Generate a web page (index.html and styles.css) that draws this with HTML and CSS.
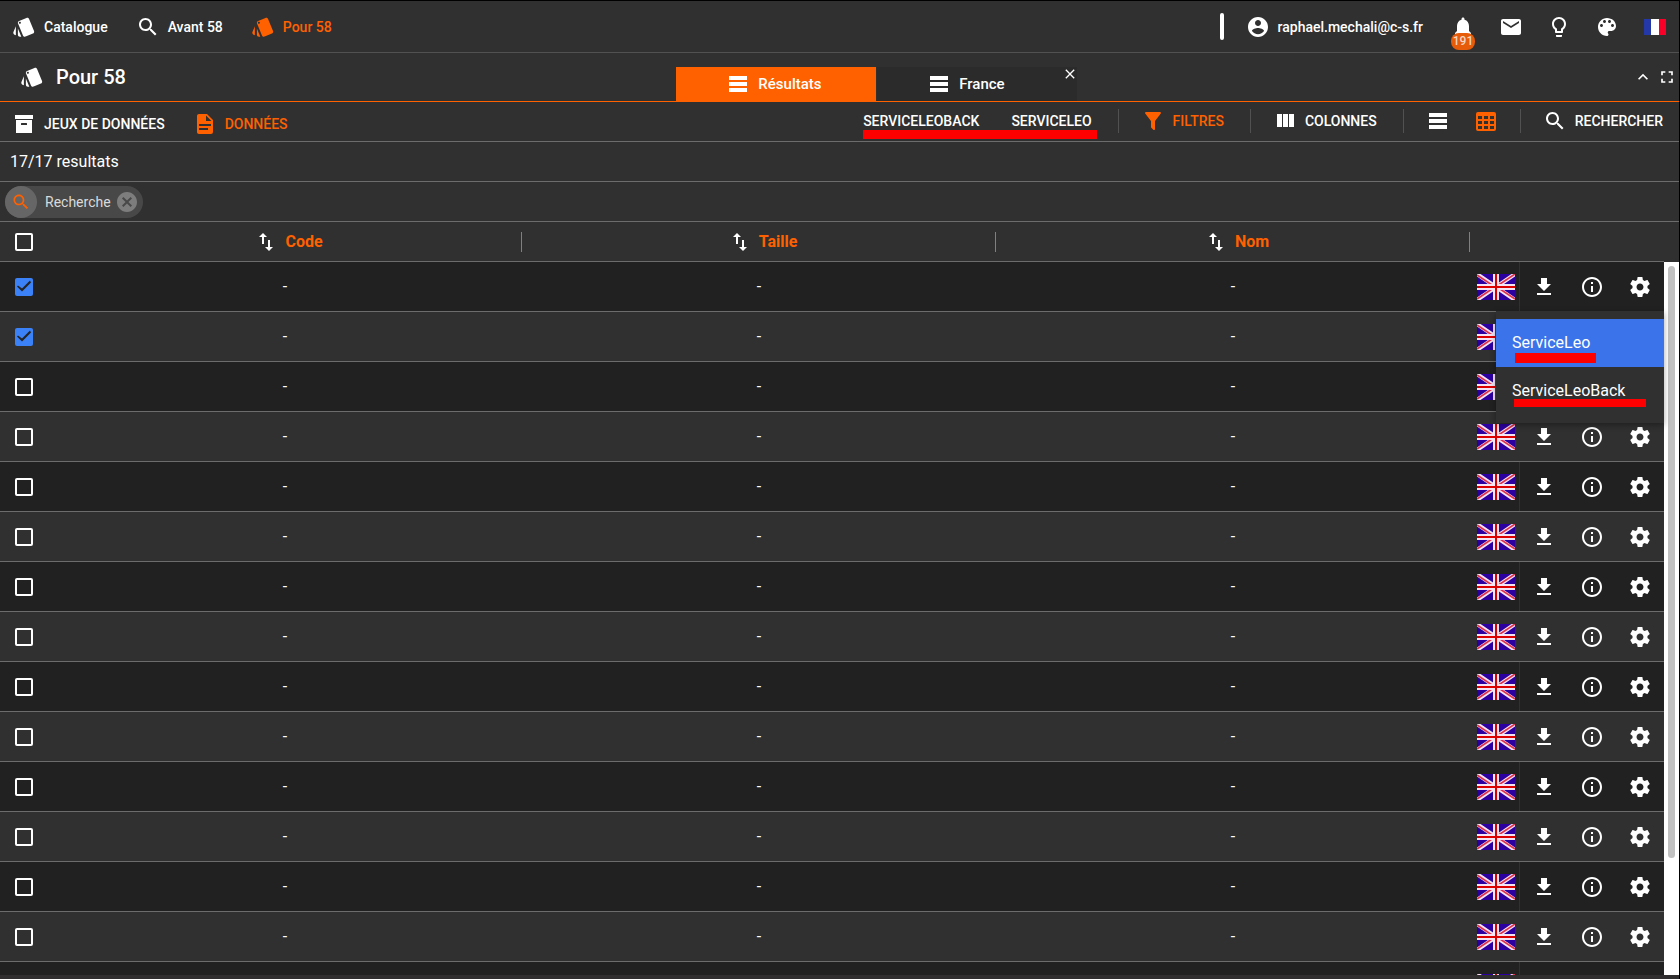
FILE: index.html
```html
<!DOCTYPE html>
<html lang="fr">
<head>
<meta charset="utf-8">
<title>Pour 58</title>
<link rel="stylesheet" href="styles.css">
</head>
<body>
<svg class="sprite" aria-hidden="true">
  <symbol id="i-style" viewBox="0 0 24 24"><path d="M2.53 19.65l1.34.56v-9.03l-2.43 5.86c-.41 1.02.08 2.19 1.09 2.61zm19.5-3.7L17.07 3.98c-.31-.75-1.04-1.21-1.81-1.23-.26 0-.53.04-.79.15L7.1 5.95c-.75.31-1.21 1.03-1.23 1.8-.01.27.04.54.15.8l4.96 11.97c.31.76 1.05 1.22 1.83 1.23.26 0 .52-.05.77-.15l7.36-3.05c1.02-.42 1.51-1.59 1.09-2.6zM7.88 8.75c-.55 0-1-.45-1-1s.45-1 1-1 1 .45 1 1-.45 1-1 1zm-2 11c0 1.1.9 2 2 2h1.45l-3.45-8.34v6.34z"/></symbol>
  <symbol id="i-search" viewBox="0 0 24 24"><path d="M15.5 14h-.79l-.28-.27C15.41 12.59 16 11.11 16 9.5 16 5.91 13.09 3 9.5 3S3 5.91 3 9.5 5.91 16 9.5 16c1.61 0 3.09-.59 4.23-1.57l.27.28v.79l5 4.99L20.49 19l-4.99-5zm-6 0C7.01 14 5 11.99 5 9.5S7.01 5 9.5 5 14 7.01 14 9.5 11.99 14 9.5 14z"/></symbol>
  <symbol id="i-archive" viewBox="0 0 24 24"><path d="M3 3H21V7H3V3M4 8H20V21H4V8M9.5 11A.5.5 0 0 0 9 11.5V13H15V11.5A.5.5 0 0 0 14.5 11H9.5Z"/></symbol>
  <symbol id="i-doc" viewBox="0 0 24 24"><path d="M13 9H18.5L13 3.5V9M6 2H14L20 8V20A2 2 0 0 1 18 22H6C4.89 22 4 21.1 4 20V4C4 2.89 4.89 2 6 2M15 18V16H6V18H15M18 14V12H6V14H18Z"/></symbol>
  <symbol id="i-lines" viewBox="0 0 24 24"><path d="M3 4h18v4H3zM3 10h18v4H3zM3 16h18v4H3z"/></symbol>
  <symbol id="i-columns" viewBox="0 0 24 24"><path d="M4 5h5v13H4zM10 5h5v13h-5zM16 5h5v13h-5z"/></symbol>
  <symbol id="i-grid" viewBox="0 0 24 24"><path fill-rule="evenodd" d="M4 3h16a2 2 0 0 1 2 2v15a2 2 0 0 1-2 2H4a2 2 0 0 1-2-2V5a2 2 0 0 1 2-2zM4 7v3h4V7zM10 7v3h4V7zM16 7v3h4V7zM4 12v3h4v-3zM10 12v3h4v-3zM16 12v3h4v-3zM4 17v3h4v-3zM10 17v3h4v-3zM16 17v3h4v-3z"/></symbol>
  <symbol id="i-filter" viewBox="0 0 24 24"><path d="M14 12V19.88C14.04 20.18 13.94 20.5 13.71 20.71C13.32 21.1 12.69 21.1 12.3 20.71L10.29 18.7C10.06 18.47 9.96 18.16 10 17.87V12H9.97L4.21 4.62C3.87 4.19 3.95 3.56 4.38 3.22C4.57 3.08 4.78 3 5 3H19C19.22 3 19.43 3.08 19.62 3.22C20.05 3.56 20.13 4.19 19.79 4.62L14.03 12H14Z"/></symbol>
  <symbol id="i-account" viewBox="0 0 24 24"><path d="M12 2C6.48 2 2 6.48 2 12s4.48 10 10 10 10-4.48 10-10S17.52 2 12 2zm0 3c1.66 0 3 1.34 3 3s-1.34 3-3 3-3-1.34-3-3 1.34-3 3-3zm0 14.2c-2.5 0-4.71-1.28-6-3.22.03-1.99 4-3.08 6-3.08 1.99 0 5.97 1.09 6 3.08-1.29 1.94-3.5 3.22-6 3.22z"/></symbol>
  <symbol id="i-bell" viewBox="0 0 24 24"><path d="M12 22c1.1 0 2-.9 2-2h-4c0 1.1.89 2 2 2zm6-6v-5c0-3.07-1.64-5.64-4.5-6.32V4c0-.83-.67-1.5-1.5-1.5s-1.5.67-1.5 1.5v.68C7.63 5.36 6 7.92 6 11v5l-2 2v1h16v-1l-2-2z"/></symbol>
  <symbol id="i-mail" viewBox="0 0 24 24"><path d="M20 4H4c-1.1 0-1.99.9-1.99 2L2 18c0 1.1.9 2 2 2h16c1.1 0 2-.9 2-2V6c0-1.1-.9-2-2-2zm0 4l-8 5-8-5V6l8 5 8-5v2z"/></symbol>
  <symbol id="i-bulb" viewBox="0 0 24 24"><path d="M9 21c0 .55.45 1 1 1h4c.55 0 1-.45 1-1v-1H9v1zm3-19C8.14 2 5 5.14 5 9c0 2.38 1.19 4.47 3 5.74V17c0 .55.45 1 1 1h6c.55 0 1-.45 1-1v-2.26c1.81-1.27 3-3.36 3-5.74 0-3.86-3.14-7-7-7zm2.85 11.1l-.85.6V16h-4v-2.3l-.85-.6C7.8 12.16 7 10.63 7 9c0-2.76 2.24-5 5-5s5 2.24 5 5c0 1.63-.8 3.16-2.15 4.1z"/></symbol>
  <symbol id="i-palette" viewBox="0 0 24 24"><path d="M12 3c-4.97 0-9 4.03-9 9s4.03 9 9 9c.83 0 1.5-.67 1.5-1.5 0-.39-.15-.74-.39-1.01-.23-.26-.38-.61-.38-.99 0-.83.67-1.5 1.5-1.5H16c2.76 0 5-2.24 5-5 0-4.42-4.03-8-9-8zm-5.5 9c-.83 0-1.5-.67-1.5-1.5S5.67 9 6.5 9 8 9.67 8 10.5 7.33 12 6.5 12zm3-4C8.67 8 8 7.33 8 6.5S8.67 5 9.5 5s1.5.67 1.5 1.5S10.33 8 9.5 8zm5 0c-.83 0-1.5-.67-1.5-1.5S13.67 5 14.5 5s1.5.67 1.5 1.5S15.33 8 14.5 8zm3 4c-.83 0-1.5-.67-1.5-1.5S16.67 9 17.5 9s1.5.67 1.5 1.5-.67 1.5-1.5 1.5z"/></symbol>
  <symbol id="i-close" viewBox="0 0 24 24"><path d="M19 6.41L17.59 5 12 10.59 6.41 5 5 6.41 10.59 12 5 17.59 6.41 19 12 13.41 17.59 19 19 17.59 13.41 12z"/></symbol>
  <symbol id="i-cancel" viewBox="0 0 24 24"><path d="M12 2C6.47 2 2 6.47 2 12s4.47 10 10 10 10-4.47 10-10S17.53 2 12 2zm5 13.59L15.59 17 12 13.41 8.41 17 7 15.59 10.59 12 7 8.41 8.41 7 12 10.59 15.59 7 17 8.41 13.41 12 17 15.59z"/></symbol>
  <symbol id="i-less" viewBox="0 0 24 24"><path d="M12 8l-6 6 1.41 1.41L12 10.83l4.59 4.58L18 14z"/></symbol>
  <symbol id="i-full" viewBox="0 0 24 24"><path d="M7 14H5v5h5v-2H7v-3zm-2-4h2V7h3V5H5v5zm12 7h-3v2h5v-5h-2v3zM14 5v2h3v3h2V5h-5z"/></symbol>
  <symbol id="i-sort" viewBox="0 0 24 24"><path d="M16 17.01V10h-2v7.01h-3L15 21l4-3.99h-3zM9 3L5 6.99h3V14h2V6.99h3L9 3z"/></symbol>
  <symbol id="i-download" viewBox="0 0 24 24"><path d="M19 9h-4V3H9v6H5l7 7 7-7zM5 18v2h14v-2H5z"/></symbol>
  <symbol id="i-info" viewBox="0 0 24 24"><path d="M11 17h2v-6h-2v6zm1-15C6.48 2 2 6.48 2 12s4.48 10 10 10 10-4.48 10-10S17.52 2 12 2zm0 18c-4.41 0-8-3.59-8-8s3.59-8 8-8 8 3.59 8 8-3.59 8-8 8zM11 9h2V7h-2v2z"/></symbol>
  <symbol id="i-gear" viewBox="0 0 24 24"><path d="M19.43 12.98c.04-.32.07-.64.07-.98s-.03-.66-.07-.98l2.11-1.65c.19-.15.24-.42.12-.64l-2-3.46c-.12-.22-.39-.3-.61-.22l-2.49 1c-.52-.4-1.08-.73-1.69-.98l-.38-2.65C14.46 2.18 14.25 2 14 2h-4c-.25 0-.46.18-.49.42l-.38 2.65c-.61.25-1.17.59-1.69.98l-2.49-1c-.23-.09-.49 0-.61.22l-2 3.46c-.13.22-.07.49.12.64l2.11 1.65c-.04.32-.07.65-.07.98s.03.66.07.98l-2.11 1.65c-.19.15-.24.42-.12.64l2 3.46c.12.22.39.3.61.22l2.49-1c.52.4 1.08.73 1.69.98l.38 2.65c.03.24.24.42.49.42h4c.25 0 .46-.18.49-.42l.38-2.65c.61-.25 1.17-.59 1.69-.98l2.49 1c.23.09.49 0 .61-.22l2-3.46c.12-.22.07-.49-.12-.64l-2.11-1.65zM12 15.5c-1.93 0-3.5-1.57-3.5-3.5s1.57-3.5 3.5-3.5 3.5 1.57 3.5 3.5-1.57 3.5-3.5 3.5z"/></symbol>
  <symbol id="i-uk" viewBox="0 0 38 26"><path fill="#2c00a0" d="M0 0h38v26H0z"/><path stroke="#f4e4f4" stroke-width="4" d="M0 0l38 26M38 0L0 26"/><path stroke="#e0304c" stroke-width="1.6" d="M0 1l18 12M20 13l18 12M38 0L20 12M18 13L0 25"/><path fill="#f4e4f4" d="M16 0h6v26h-6zM0 10h38v6H0z"/><path fill="#dc0000" d="M18 0h2v26h-2zM0 12h38v2H0z"/></symbol>
  <symbol id="i-fr" viewBox="0 0 22 16"><path fill="#2438a8" d="M0 0h8v16H0z"/><path fill="#fff" d="M7 0h8v16H7z"/><path fill="#fa0028" d="M15 0h7v16h-7z"/></symbol>
</svg>
<div class="app">
  <header class="topbar">
    <nav class="topbar-nav">
      <a class="nav-link" href="#"><svg class="icon"><use href="#i-style"/></svg>Catalogue</a>
      <a class="nav-link" href="#"><svg class="icon"><use href="#i-search"/></svg>Avant 58</a>
      <a class="nav-link active" href="#"><svg class="icon"><use href="#i-style"/></svg>Pour 58</a>
    </nav>
    <div class="topbar-tools">
      <span class="topbar-bar"></span>
      <button class="account"><svg class="icon"><use href="#i-account"/></svg>raphael.mechali@c-s.fr</button>
      <button class="icon-button" aria-label="Notifications"><svg class="icon"><use href="#i-bell"/></svg><span class="badge">191</span></button>
      <button class="icon-button" aria-label="Contact"><svg class="icon"><use href="#i-mail"/></svg></button>
      <button class="icon-button" aria-label="Aide"><svg class="icon"><use href="#i-bulb"/></svg></button>
      <button class="icon-button" aria-label="Thème"><svg class="icon"><use href="#i-palette"/></svg></button>
      <button class="icon-button" aria-label="Langue"><svg class="flag-fr"><use href="#i-fr"/></svg></button>
    </div>
  </header>

  <section class="titlebar">
    <h1 class="title"><svg class="icon"><use href="#i-style"/></svg>Pour 58</h1>
    <div class="tabs">
      <button class="tab selected"><svg class="icon"><use href="#i-lines"/></svg>Résultats</button>
      <div class="tab-wrap">
        <button class="tab closable"><svg class="icon"><use href="#i-lines"/></svg>France</button>
        <button class="tab-close" aria-label="Fermer"><svg class="icon-small"><use href="#i-close"/></svg></button>
      </div>
    </div>
    <div class="title-tools">
      <button class="mini-button" aria-label="Réduire"><svg class="icon-mini"><use href="#i-less"/></svg></button>
      <button class="mini-button" aria-label="Plein écran"><svg class="icon-mini"><use href="#i-full"/></svg></button>
    </div>
  </section>

  <section class="toolbar">
    <div class="toolbar-views">
      <button class="view-button"><svg class="icon"><use href="#i-archive"/></svg>JEUX DE DONNÉES</button>
      <button class="view-button active"><svg class="icon"><use href="#i-doc"/></svg>DONNÉES</button>
    </div>
    <div class="toolbar-actions">
      <div class="services">
        <button class="tool-button">SERVICELEOBACK</button>
        <button class="tool-button">SERVICELEO</button>
        <span class="mark mark-services"></span>
      </div>
      <span class="divider"></span>
      <button class="tool-button active"><svg class="icon"><use href="#i-filter"/></svg>FILTRES</button>
      <span class="divider"></span>
      <button class="tool-button"><svg class="icon"><use href="#i-columns"/></svg>COLONNES</button>
      <span class="divider"></span>
      <div class="layouts">
        <button class="icon-button" aria-label="Liste"><svg class="icon"><use href="#i-lines"/></svg></button>
        <button class="icon-button active" aria-label="Tableau"><svg class="icon"><use href="#i-grid"/></svg></button>
      </div>
      <span class="divider"></span>
      <button class="tool-button"><svg class="icon"><use href="#i-search"/></svg>RECHERCHER</button>
    </div>
  </section>

  <p class="count">17/17 resultats</p>

  <div class="chips">
    <span class="chip">
      <span class="chip-avatar"><svg class="icon-chip"><use href="#i-search"/></svg></span>
      Recherche
      <button class="chip-delete" aria-label="Supprimer"><svg class="icon"><use href="#i-cancel"/></svg></button>
    </span>
  </div>

  <main class="results">
    <table class="grid">
      <colgroup><col class="col-check"><col><col><col><col class="col-options"></colgroup>
      <thead>
        <tr>
          <th><input class="check" type="checkbox" aria-label="Tout sélectionner"></th>
          <th><button class="sort"><svg class="icon"><use href="#i-sort"/></svg>Code</button></th>
          <th><button class="sort"><svg class="icon"><use href="#i-sort"/></svg>Taille</button></th>
          <th><button class="sort"><svg class="icon"><use href="#i-sort"/></svg>Nom</button></th>
          <th></th>
        </tr>
      </thead>
      <tbody id="rows"></tbody>
    </table>
    <div class="scroll"><div class="scroll-thumb"></div></div>
    <div class="menu" role="menu">
      <button class="menu-item selected" role="menuitem">ServiceLeo<span class="mark mark-first"></span></button>
      <button class="menu-item" role="menuitem">ServiceLeoBack<span class="mark mark-second"></span></button>
    </div>
  </main>
</div>
<script src="app.js"></script>
</body>
</html>
```

FILE: styles.css
```css
* { box-sizing: border-box; }

body {
  margin: 0;
  background: #302e2f;
  color: #fff;
  font-family: Roboto, "Liberation Sans", sans-serif;
  font-size: 14px;
}

button {
  margin: 0;
  padding: 0;
  border: 0;
  background: none;
  color: inherit;
  font: inherit;
}

.sprite { position: absolute; width: 0; height: 0; }

.app {
  display: flex;
  flex-direction: column;
  height: 100vh;
  padding-bottom: 4px;
  border-top: 1px solid #000;
  border-right: 1px solid #000;
  overflow: hidden;
}

.icon { flex: none; display: block; width: 24px; height: 24px; fill: currentColor; }
.icon-small { display: block; width: 16px; height: 16px; fill: currentColor; }
.icon-mini { display: block; width: 20px; height: 20px; fill: currentColor; }

.icon-button {
  position: relative;
  display: flex;
  align-items: center;
  justify-content: center;
  width: 48px;
  height: 38px;
}

.active { color: #ff6100; }

/* Top bar */
.topbar {
  display: flex;
  align-items: center;
  justify-content: space-between;
  height: 52px;
  flex: none;
  background: #303030;
  border-bottom: 1px solid #515151;
  font-weight: 500;
}

.topbar-nav { display: flex; gap: 28px; padding-left: 12px; }

.nav-link {
  display: flex;
  align-items: center;
  gap: 8px;
  color: #fff;
  text-decoration: none;
}
.nav-link.active { color: #ff6100; }

.topbar-tools { display: flex; align-items: center; }
.topbar-bar { width: 4px; height: 27px; border-radius: 2px; background: #fff; }
.account { display: flex; align-items: center; gap: 8px; padding: 0 16px 0 22px; }
.flag-fr { display: block; width: 22px; height: 16px; }

.badge {
  position: absolute;
  top: 25px;
  left: 12px;
  width: 24px;
  height: 17px;
  border-radius: 8px;
  background: #e65c08;
  color: #f3d5c3;
  font-size: 12px;
  line-height: 16px;
  text-align: center;
}

/* Title and tabs */
.titlebar {
  display: flex;
  align-items: center;
  height: 49px;
  flex: none;
  background: #303030;
  border-bottom: 1px solid #ff6100;
}

.title {
  display: flex;
  align-items: center;
  gap: 12px;
  margin: 0;
  padding: 0 12px 0 20px;
  font-size: 20px;
  font-weight: 500;
}

.tabs { flex: 1; align-self: flex-end; display: flex; justify-content: center; gap: 1px; }
.tab-wrap { position: relative; background: #2b2b2b; }

.tab {
  display: flex;
  align-items: center;
  justify-content: center;
  gap: 8px;
  width: 200px;
  height: 34px;
  padding-right: 4px;
  font-weight: 500;
  font-size: 15px;
}
.tab.selected { background: #ff6100; }
.tab.closable { padding-right: 22px; }
.tab-close { position: absolute; top: -1px; right: -1px; }

.title-tools { display: flex; padding-left: 16px; }
.mini-button { display: flex; align-items: center; justify-content: center; width: 24px; height: 24px; }

/* Toolbar */
.toolbar {
  display: flex;
  justify-content: space-between;
  height: 40px;
  flex: none;
  background: #303030;
  border-bottom: 1px solid #6c6c6c;
  font-weight: 500;
}

.toolbar-views { display: flex; align-items: center; gap: 28px; padding: 5px 0 0 12px; }
.view-button { display: flex; align-items: center; gap: 8px; }
.toolbar-actions { display: flex; align-items: center; padding-bottom: 1px; }
.services { position: relative; display: flex; }
.layouts { display: flex; padding-left: 4px; }
.tool-button { display: flex; align-items: center; gap: 8px; height: 38px; padding: 0 16px; }
.divider { width: 1px; height: 24px; margin: 0 6px 0 10px; background: #515151; }

/* Underline strokes drawn over the service names */
.mark { position: absolute; background: #f00; }
.mark-services { left: 16px; right: 11px; top: 28px; height: 9px; }
.mark-first { left: 19px; width: 81px; top: 34px; height: 10px; }
.mark-second { left: 18px; width: 132px; top: 32px; height: 8px; }

.count {
  flex: none;
  height: 40px;
  margin: 0;
  padding-left: 10px;
  background: #303030;
  border-bottom: 1px solid #6c6c6c;
  font-size: 16px;
  line-height: 39px;
}

.chips {
  display: flex;
  align-items: center;
  flex: none;
  height: 40px;
  padding-left: 5px;
  background: #303030;
  border-bottom: 1px solid #6c6c6c;
}

.chip {
  display: flex;
  align-items: center;
  height: 32px;
  padding-right: 4px;
  border-radius: 16px;
  background: #484848;
  color: #dadada;
}

.chip-avatar {
  display: flex;
  align-items: center;
  justify-content: center;
  width: 32px;
  height: 32px;
  margin-right: 8px;
  border-radius: 50%;
  background: #666;
  color: #ff6100;
}
.icon-chip { width: 20px; height: 20px; fill: currentColor; }
.chip-delete { margin-left: 4px; color: #7d7d7d; }

/* Results table */
.results { position: relative; flex: 1; min-height: 0; display: flex; background: #303030; overflow: hidden; }

.grid {
  flex: 1;
  align-self: flex-start;
  table-layout: fixed;
  width: 100%;
  border-collapse: separate;
  border-spacing: 0;
  font-size: 16px;
}
.col-check { width: 48px; }
.col-options { width: 194px; }

.grid th { height: 40px; padding: 0; border-bottom: 1px solid #6c6c6c; position: relative; }
.grid th:nth-child(n+2):nth-child(-n+4)::after {
  content: "";
  position: absolute;
  right: 0;
  top: 10px;
  width: 1px;
  height: 20px;
  background: #808080;
}
.grid td { height: 50px; padding: 0; border-bottom: 1px solid #6c6c6c; text-align: center; }
.grid tbody tr:nth-child(odd) { background: #212121; }

.sort {
  display: flex;
  align-items: center;
  justify-content: center;
  gap: 7px;
  width: 100%;
  padding-left: 7px;
  color: #ff6100;
  font-weight: 700;
}
.sort .icon { color: #fff; }

.check {
  appearance: none;
  display: block;
  width: 18px;
  height: 18px;
  margin: 0 auto;
  border: 2px solid #fff;
  border-radius: 2px;
}
.check:checked { border: 0; background: #3b82f8; }
.check:checked::before {
  content: "";
  display: block;
  width: 18px;
  height: 18px;
  background: #242424;
  clip-path: polygon(2px 9px, 3px 8px, 7px 11px, 15px 3px, 16px 5px, 7px 14px);
}

.options { display: flex; height: 49px; }
.flag-cell { display: flex; align-items: center; justify-content: center; width: 50px; padding-left: 3px; border-right: 1px solid #303030; }
.flag-uk { display: block; width: 38px; height: 26px; }
.options .icon-button { height: 49px; }

.scroll { flex: none; width: 15px; margin-top: 40px; padding: 4px; background: #fff; }
.scroll-thumb { width: 7px; height: 84%; border-radius: 4px; background: #c1c1c1; }

.menu {
  position: absolute;
  top: 89px;
  right: 15px;
  width: 168px;
  padding: 8px 0;
  background: #303030;
  box-shadow: 0 2px 6px rgba(0, 0, 0, 0.35);
}
.menu-item {
  position: relative;
  display: block;
  width: 100%;
  height: 48px;
  padding: 0 16px 2px;
  text-align: left;
  font-size: 16px;
}
.menu-item.selected { background: #3b73ea; }
```

FILE: app.js
```javascript
const rows = Array.from({ length: 15 }, (_, i) => ({ code: "-", taille: "-", nom: "-", checked: i < 2 }));

const action = (icon, label) =>
  `<button class="icon-button" aria-label="${label}"><svg class="icon"><use href="#i-${icon}"/></svg></button>`;

document.getElementById("rows").innerHTML = rows.map((row, i) => `
  <tr>
    <td><input class="check" type="checkbox" aria-label="Ligne ${i + 1}" ${row.checked ? "checked" : ""}></td>
    <td>${row.code}</td>
    <td>${row.taille}</td>
    <td>${row.nom}</td>
    <td><div class="options">
      <span class="flag-cell"><svg class="flag-uk"><use href="#i-uk"/></svg></span>
      ${action("download", "Télécharger")}${action("info", "Détails")}${action("gear", "Services")}
    </div></td>
  </tr>`).join("");
```
